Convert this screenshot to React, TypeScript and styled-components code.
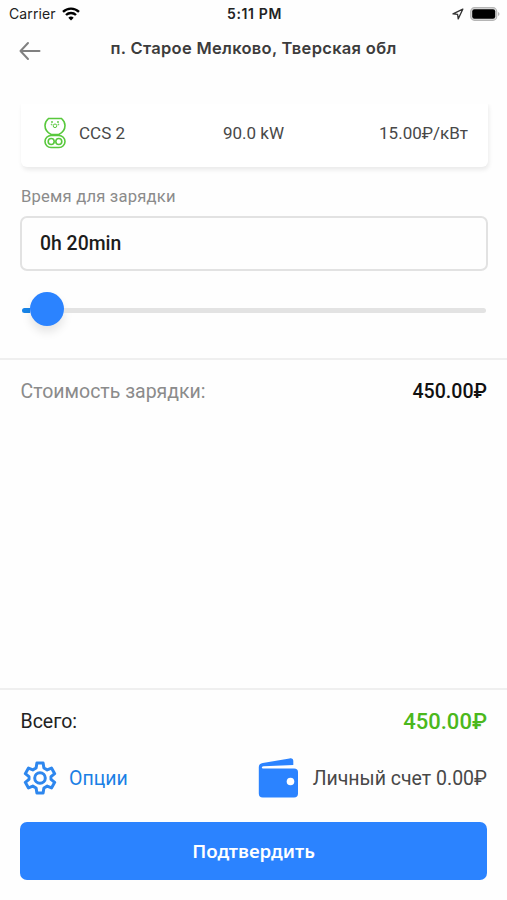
import styled, { createGlobalStyle } from 'styled-components'

const theme = {
  blue: '#2b83ff',
  link: '#1a80e5',
  green: '#4bb81c',
  text: '#484848',
  muted: '#8b8b8b',
  line: '#e3e3e3',
  divider: '#efefef',
}

const GlobalStyle = createGlobalStyle`
  * {
    box-sizing: border-box;
  }

  body {
    margin: 0;
    background: #fff;
    font-family: Roboto, sans-serif;
  }
`

const Screen = styled.main`
  display: flex;
  flex-direction: column;
  width: 100%;
  height: 900px;
  overflow: hidden;
  background: #fefefe;
`

const StatusBar = styled.div`
  display: grid;
  grid-template-columns: 1fr auto 1fr;
  align-items: center;
  height: 27px;
  padding: 0 7px 0 9px;
  color: #222;
  font-family: Inter, sans-serif;
  font-size: 14px;
`

const StatusGroup = styled.div<{ $end?: boolean }>`
  display: flex;
  align-items: center;
  justify-content: ${({ $end }) => ($end ? 'flex-end' : 'flex-start')};
  gap: 6px;
  letter-spacing: 0.1px;
`

const Clock = styled.span`
  font-size: 14px;
  font-weight: 600;
  letter-spacing: 0.6px;
`

const Header = styled.header`
  display: grid;
  grid-template-columns: 24px 1fr 24px;
  align-items: center;
  height: 73px;
  padding: 0 18px 32px;
`

const BackButton = styled.button`
  display: flex;
  padding: 6px 0 0;
  border: 0;
  background: none;
`

const Title = styled.h1`
  margin: 0;
  color: #3c3c3c;
  font-family: Inter, sans-serif;
  font-size: 16.5px;
  font-weight: 600;
  line-height: 20px;
  letter-spacing: 0.3px;
  text-align: center;
  white-space: nowrap;
`

const Connector = styled.section`
  display: flex;
  align-items: center;
  height: 67px;
  margin: 0 19px 0 21px;
  padding: 0 20px 2px 23px;
  border-radius: 6px;
  color: ${theme.text};
  background: #fff;
  box-shadow: 1px 3px 4px rgba(0, 0, 0, 0.08);
  clip-path: inset(4px -8px -10px -8px);
  font-size: 17px;
  line-height: 20px;
`

const ConnectorName = styled.span`
  width: 144px;
  margin-left: 13px;
`

const Price = styled.span`
  margin-left: auto;
`

const TimeSection = styled.section`
  height: 193px;
  padding: 19px 19px 0 20px;
  border-bottom: 2px solid ${theme.divider};
`

const Label = styled.label`
  display: block;
  padding-left: 1px;
  color: ${theme.muted};
  font-size: 16.6px;
  line-height: 22px;
  letter-spacing: 0.2px;
`

const TimeField = styled.div`
  display: flex;
  align-items: center;
  height: 55px;
  margin-top: 8px;
  padding-left: 18px;
  border: 2px solid #e2e2e2;
  border-radius: 7px;
  color: #1c1c1c;
  font-size: 19.4px;
  font-weight: 500;
`

const Slider = styled.div`
  display: flex;
  align-items: center;
  height: 34px;
  margin: 21px 2px 0;
`

const Track = styled.div<{ $filled?: boolean }>`
  flex: ${({ $filled }) => ($filled ? '0 0 8px' : '1')};
  height: 5px;
  margin-top: 2px;
  border-radius: ${({ $filled }) => ($filled ? '3px 0 0 3px' : '0 3px 3px 0')};
  background: ${({ $filled }) => ($filled ? '#1784e8' : theme.line)};
`

const Thumb = styled.div`
  width: 34px;
  height: 34px;
  border-radius: 50%;
  background: ${theme.blue};
  box-shadow: 0 6px 10px rgba(0, 0, 0, 0.1);
`

const Row = styled.div`
  display: flex;
  align-items: center;
  justify-content: space-between;
  padding: 0 20px 0 20.5px;
`

const CostRow = styled(Row)`
  height: 62px;
  color: ${theme.muted};
  font-size: 19.5px;
`

const Amount = styled.strong<{ $total?: boolean }>`
  color: ${({ $total }) => ($total ? theme.green : '#111')};
  font-size: ${({ $total }) => ($total ? '22px' : '19.6px')};
  font-weight: 500;
`

const Footer = styled.footer`
  margin-top: auto;
  height: 212px;
  border-top: 2px solid ${theme.divider};
`

const TotalRow = styled(Row)`
  height: 63px;
  color: #222;
  font-size: 19.5px;
`

const ActionRow = styled(Row)`
  height: 50px;
  padding-left: 23px;
`

const Action = styled.div<{ $link?: boolean }>`
  display: flex;
  align-items: center;
  gap: ${({ $link }) => ($link ? '12px' : '14px')};
  color: ${({ $link }) => ($link ? theme.link : theme.text)};
  font-size: 19.5px;
  white-space: nowrap;
`

const ConfirmButton = styled.button`
  display: block;
  width: calc(100% - 40px);
  height: 58px;
  margin: 19px 20px 0;
  padding: 0 0 2px;
  border: 0;
  border-radius: 7px;
  color: #fff;
  background: ${theme.blue};
  font-family: 'Noto Sans', sans-serif;
  font-size: 18.7px;
  font-weight: 600;
`

const WifiIcon = () => (
  <svg width="18" height="14" viewBox="0 0 18 14" fill="none" stroke="#000" strokeWidth="2.4">
    <path d="M1 4.8a11.6 11.6 0 0 1 16 0" />
    <path d="M4 8a7.2 7.2 0 0 1 10 0" />
    <path d="M6.3 10.7a4 4 0 0 1 5.4 0L9 13.5z" fill="#000" stroke="none" />
  </svg>
)

const LocationIcon = () => (
  <svg width="12" height="12" viewBox="0 0 12 12" fill="none" stroke="#333" strokeWidth="1.3" strokeLinejoin="round">
    <path d="M10.8 1.2 1 5.9l4.6.5.6 4.5z" />
  </svg>
)

const BatteryIcon = () => (
  <svg width="30" height="14" viewBox="0 0 30 14">
    <rect x=".7" y=".7" width="26" height="12.6" rx="3.8" fill="#ddd" stroke="#b5b5b5" strokeWidth="1.2" />
    <rect x="2.2" y="2.2" width="23" height="9.6" rx="2.2" fill="#000" />
    <path d="M28 5v4c2-.7 2-3.3 0-4z" fill="#b5b5b5" />
  </svg>
)

const BackIcon = () => (
  <svg width="24" height="20" viewBox="0 0 24 20" fill="none" stroke="#808080" strokeWidth="2">
    <path d="M21.5 10h-19M10 2l-7.5 8 7.5 8" strokeLinecap="round" strokeLinejoin="round" />
  </svg>
)

const PlugIcon = () => (
  <svg width="22" height="32" viewBox="0 0 22 32" fill="none" stroke="#58c83c" strokeWidth="1.6">
    <path d="M4.5 1.5h13C19.7 3.5 21 5.900 21 8.500c0 4-2.800 7.300-6.200 9H7.200C3.800 15.800 1 12.500 1 8.500c0-2.600 1.300-5 3.500-7z" />
    <rect x="1" y="18.500" width="20" height="12" rx="6" />
    <circle cx="7.200" cy="24.500" r="3" />
    <circle cx="14.800" cy="24.500" r="3" />
    <g strokeWidth="1">
      <circle cx="11" cy="8.800" r="1.800" />
      <circle cx="8" cy="5" r=".6" />
      <circle cx="14" cy="5" r=".6" />
      <circle cx="7.600" cy="7.500" r=".4" />
      <circle cx="14.400" cy="7.500" r=".4" />
    </g>
  </svg>
)

const GearIcon = () => (
  <svg width="34" height="34" viewBox="0 0 34 34" fill="none" stroke="#2e87ee" strokeWidth="3" strokeLinejoin="round">
    <path d="M13.900 2h6.200l.8 5 3.300 1.900 4.300-1.800 3.200 5.600-3.700 3v2.600l3.700 3-3.200 5.600-4.300-1.800-3.300 1.900-.8 5h-6.200l-.8-5-3.300-1.900-4.300 1.800-3.200-5.600 3.700-3v-2.600l-3.700-3 3.200-5.600 4.300 1.800 3.300-1.900z" />
    <circle cx="17" cy="17" r="5.300" />
  </svg>
)

const WalletIcon = () => (
  <svg width="41" height="40" viewBox="0 0 41 40" fill={theme.blue}>
    <path d="M.8 9C.8 6.500 2.300 5.300 4.800 4.900L31.500.4c2.500-.4 3.800.5 3.800 2.500v4L5.500 8.300c-2.200.2-2.200 2 0 2.100H36c2.800 0 4 1.300 4 3.600v21.500c0 2.800-1.300 4-4 4H4.800c-2.700 0-4-1.200-4-4z" />
    <circle cx="32.500" cy="23.500" r="3.800" fill="#fff" />
  </svg>
)

const App = () => {
  return (
    <Screen>
      <GlobalStyle />
      <StatusBar>
        <StatusGroup>
          Carrier
          <WifiIcon />
        </StatusGroup>
        <Clock>5:11 PM</Clock>
        <StatusGroup $end>
          <LocationIcon />
          <BatteryIcon />
        </StatusGroup>
      </StatusBar>
      <Header>
        <BackButton aria-label="Назад">
          <BackIcon />
        </BackButton>
        <Title>п. Старое Мелково, Тверская обл</Title>
      </Header>
      <Connector>
        <PlugIcon />
        <ConnectorName>CCS 2</ConnectorName>
        <span>90.0 kW</span>
        <Price>15.00₽/кВт</Price>
      </Connector>
      <TimeSection>
        <Label>Время для зарядки</Label>
        <TimeField>0h 20min</TimeField>
        <Slider>
          <Track $filled />
          <Thumb />
          <Track />
        </Slider>
      </TimeSection>
      <CostRow>
        <span>Стоимость зарядки:</span>
        <Amount>450.00₽</Amount>
      </CostRow>
      <Footer>
        <TotalRow>
          <span>Всего:</span>
          <Amount $total>450.00₽</Amount>
        </TotalRow>
        <ActionRow>
          <Action $link>
            <GearIcon />
            Опции
          </Action>
          <Action>
            <WalletIcon />
            Личный счет 0.00₽
          </Action>
        </ActionRow>
        <ConfirmButton>Подтвердить</ConfirmButton>
      </Footer>
    </Screen>
  )
}

export default App
